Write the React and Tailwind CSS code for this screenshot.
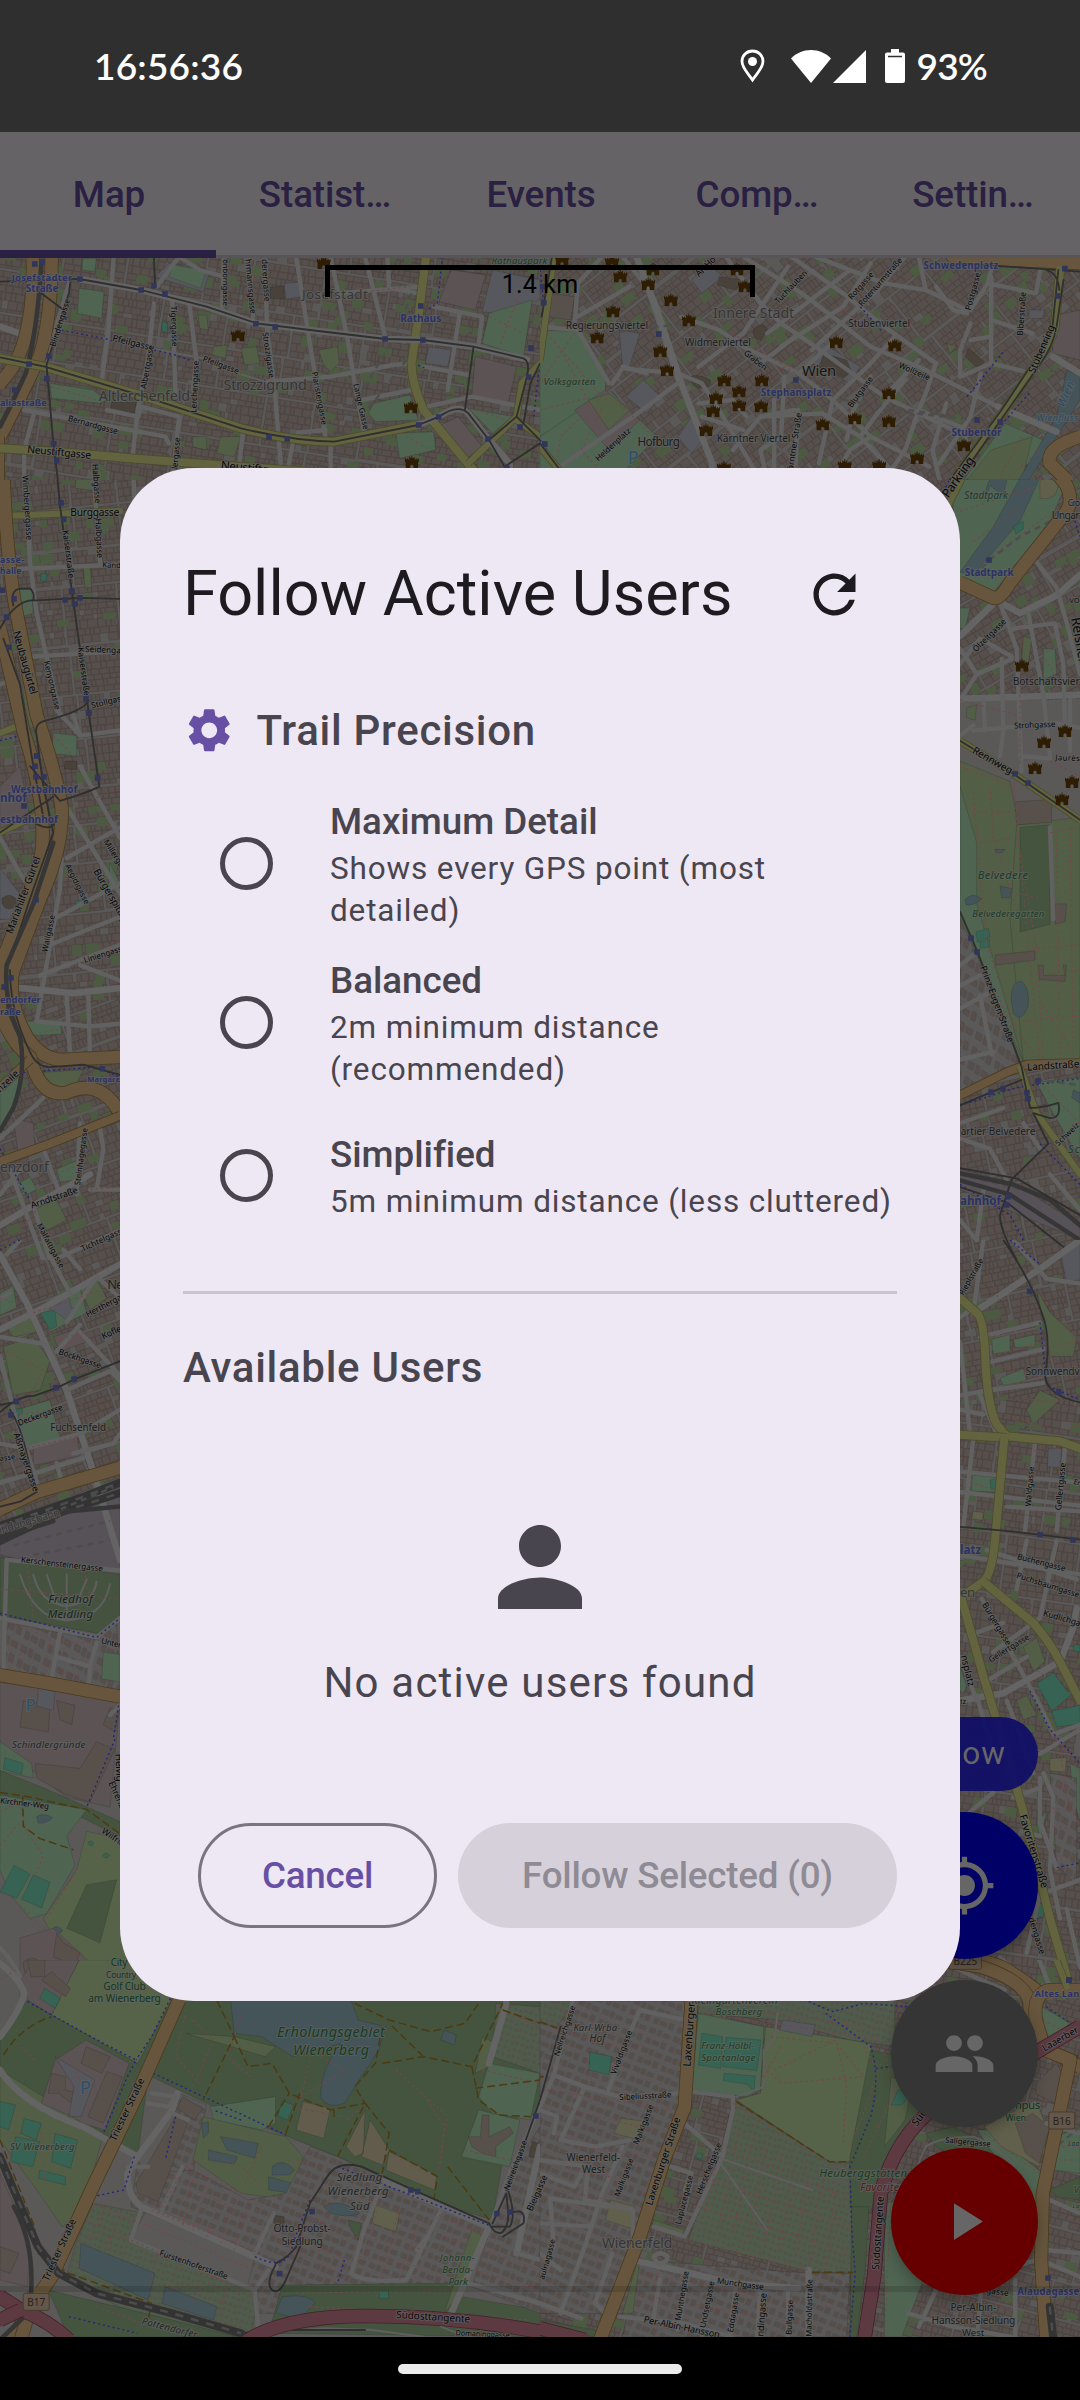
import React from "react";
import { MdRefresh, MdSettings, MdPerson, MdPeople, MdMyLocation, MdPlayArrow } from "react-icons/md";

/* ---------- Map styling ---------- */

const LINES = {
  w: ["#5f5f5f", 2],
  W: ["#616161", 4.4],
  V: ["#646464", 6.5],
  y: ["#62633f", 6, "#4c4d2a"],
  Y: ["#63643f", 8, "#4c4d2a"],
  o: ["#67563d", 8, "#4a3a1c"],
  O: ["#67563d", 12.5, "#4a3a1c"],
  M: ["#5d3a42", 13, "#43202a"],
  t: ["#2f2f2f", 1.8],
  r: ["#363636", 4.5],
  R: ["#333333", 8],
  d: ["#4d4d4d", 2.4, null, "6 5"],
  f: ["#74474a", 1.1, null, "2.5 3"],
  b: ["#25257a", 1.4, null, "2 3"],
  k: ["#4c3a10", 1.5, null, "8 4"],
};

const FILLS = {
  wood: "#45543f",
  grass: "#525e46",
  park: "#506452",
  golf: "#566349",
  water: "#445459",
  pitch: "#376354",
  bld: "#57504b",
  dark: "#48423b",
  retail: "#5c5355",
  rail: "#575257",
  plaza: "#57575e",
  cem: "#44523f",
  sand: "#615c4b",
  allot: "url(#plots)",
  res: "url(#homes)",
  hosp: "#61604c",
};

const TILES = [
  {
    x: 0, y: 250, w: 540, h: 230, vw: 1568, vh: 690,
    shapes: [
      ["plaza", "M490 40L610 60L590 125L450 80Z"],
      ["park", "M503 45L600 62L582 115L490 80Z"],
      ["park", "M240 25L280 25L275 65L238 60Z"],
      ["park", "M230 115L302 125L295 205L225 190Z"],
      ["dark", "M785 112L825 108L825 148L785 145Z"],
      ["plaza", "M825 100L870 96L875 140L830 148Z"],
      ["retail", "M1310 60L1410 75L1380 180L1275 155Z"],
      ["plaza", "M1430 60L1568 90L1568 150L1440 190L1400 185Z"],
      ["park", "M1420 190L1545 150L1520 320L1400 280Z"],
      ["grass", "M575 195L600 195L605 240L580 235Z"],
      ["pitch", "M470 215L487 220L485 248L470 244Z"],
      ["grass", "M620 290L660 285L655 325L615 315Z"],
      ["grass", "M700 295L745 290L755 340L710 345Z"],
      ["grass", "M925 300L980 290L985 340L960 365L940 345Z"],
      ["park", "M145 400L270 420L310 450L290 460L150 445Z"],
      ["dark", "M325 455L395 458L390 490L320 480Z"],
      ["park", "M1085 460L1190 435L1215 510L1090 515L1070 490Z"],
      ["park", "M1150 550L1260 545L1265 600L1160 625Z"],
      ["plaza", "M1245 290L1310 300L1300 350L1235 340Z"],
      ["retail", "M1380 320L1500 350L1475 460L1370 440Z"],
      ["park", "M1360 475L1490 500L1430 550Z"],
      ["retail", "M1250 540L1330 500L1400 590L1350 630Z"],
      ["grass", "M560 560L600 560L600 600L560 590Z"],
      ["grass", "M640 560L700 560L680 620L630 610Z"],
      ["V", "M0 230L90 262"],
      ["W", "M330 20L315 240L295 400"],
      ["W", "M447 160L430 330L400 480L385 620"],
      ["W", "M500 150L510 440M550 165L570 330L560 420"],
      ["W", "M520 20L455 110M520 20L580 60L650 80"],
      ["W", "M650 20L645 170M715 20L735 200M770 20L775 230L800 450L815 640"],
      ["w", "M300 265L510 310L590 325L690 370L770 395"],
      ["W", "M770 395L960 380L1140 345L1195 340"],
      ["W", "M860 20L895 250L945 560M960 20L1010 270L1030 400L1060 560"],
      ["W", "M1060 20L1120 267M1125 20L1130 115L1215 130M980 130L1220 110"],
      ["W", "M1260 170L1400 200L1390 280M1335 190L1300 420M1230 350L1360 375"],
      ["W", "M1050 450L1195 420M1240 470L1370 440L1568 480"],
      ["W", "M70 480L480 560L490 580M100 485L70 600L70 690"],
      ["W", "M310 480L400 500L410 470L520 500L500 690M705 550L690 690M850 580L830 690M960 590L960 690"],
      ["W", "M865 548L945 540M200 100L130 345"],
      ["f", "M1030 130L1190 110M730 20L740 100M690 270L700 380M1290 60L1270 160M1420 200L1520 250M1500 150L1450 290M1070 560L1065 680M1180 560L1250 600M150 410L280 450M1380 480L1470 510"],
      ["b", "M150 235L300 265L500 312L550 330M1285 20L1270 160L1240 180M1568 330L1550 500M1200 340L1235 355"],
      ["d", "M1195 130L1150 250L1010 500L980 650M1180 330L1060 490"],
      ["O", "M95 20Q100 180 65 290Q45 350 0 400"],
      ["O", "M150 20Q150 200 115 320Q60 440 0 560"],
      ["o", "M0 560L0 690"],
      ["r", "M120 40Q110 230 75 370L30 470L0 530"],
      ["Y", "M1237 20L1215 200L1195 340Q1195 400 1230 480L1350 630L1400 690"],
      ["Y", "M0 325L130 350L420 440L700 535Q850 575 970 575L1215 525"],
      ["Y", "M0 595L160 605L380 625L760 655L900 665"],
      ["y", "M1568 340L1515 400L1500 500L1400 600L1360 640M1500 510L1568 560"],
      ["V", "M230 87L410 120L600 170L745 220L900 240L1120 267L1228 270L1375 290L1530 328"],
      ["V", "M1215 525L1275 500Q1330 460 1360 490L1420 570L1480 640L1480 690"],
      ["t", "M0 95L230 87L410 120L600 170L745 220L900 240L1120 267L1228 270L1375 290L1520 325Q1540 335 1530 380L1500 500L1420 570"],
      ["t", "M447 20L450 105M205 90L200 130L135 345L155 580L168 690M120 130L185 180"],
      ["t", "M0 322L130 350L420 440L700 535Q850 572 970 575L1215 525L1275 500Q1330 460 1360 490L1420 570L1465 650M1375 290L1350 480M1500 500L1568 570M1568 340L1540 400L1520 520M1465 650L1568 580"],
    ],
    stops: [[101, 42], [122, 36], [232, 87], [447, 107], [410, 120], [479, 132], [743, 221], [799, 231], [1118, 267], [1228, 270], [1222, 168], [142, 318], [84, 342], [136, 386], [43, 420], [156, 581], [165, 632], [781, 561], [834, 567], [1216, 525], [1274, 501], [1417, 567], [1510, 531], [1535, 381], [1542, 294], [1472, 655]],
    castles: [[940, 38], [691, 255], [1193, 471], [1196, 636]],
    labels: [
      ["s", 34, 92, 210, 92, "Josefstädter"], ["s", 75, 126, 170, 126, "Straße"],
      ["s", 1162, 215, 1281, 215, "Rathaus"], ["s", 0, 469, 136, 469, "aliastraße"],
      ["q", 287, 452, 552, 452, "Altlerchenfeld"], ["q", 649, 420, 891, 420, "Strozzigrund"], ["q", 877, 147, 1068, 147, "Josefstadt"],
      ["n", 78, 608, 264, 626, "Neustiftgasse"], ["n", 640, 657, 780, 672, "Neustiftg"],
      ["n", 196, 512, 340, 553, "Bernardgasse"], ["n", 325, 272, 445, 303, "Pfeilgasse"], ["n", 587, 332, 690, 372, "Pfeilgasse"],
      ["n", 160, 292, 204, 150, "Blindengasse"], ["n", 424, 418, 447, 287, "Albertgasse"], ["n", 496, 168, 500, 290, "Tigergasse"],
      ["n", 570, 488, 577, 333, "Lerchengasse"], ["n", 762, 248, 782, 384, "Strozzigasse"], ["n", 905, 367, 934, 526, "Piaristengasse"],
      ["n", 1026, 403, 1056, 540, "Lange Gasse"], ["n", 648, 28, 648, 168, "önborngasse"], ["n", 712, 28, 727, 192, "hrmannsgasse"], ["n", 760, 28, 768, 155, "derergasse"],
      ["n", 515, 658, 523, 563, "lergasse"], ["n", 268, 640, 270, 690, "Halb"], ["g", 1427, 41, 1590, 41, "Rathauspark"],
    ],
  },
  {
    x: 540, y: 250, w: 540, h: 230, vw: 1568, vh: 690,
    shapes: [
      ["park", "M0 240L110 245L190 390L190 440L0 560Z"],
      ["park", "M0 560L200 420L340 560L220 690L0 690Z"],
      ["retail", "M100 480L190 420L290 510L200 600Z"],
      ["grass", "M140 450L200 430L260 480L200 540Z"],
      ["bld", "M30 130L100 140L90 210L25 200Z"],
      ["plaza", "M250 440L300 390L350 440L310 490Z"],
      ["plaza", "M230 240L290 250L260 350L240 350Z"],
      ["plaza", "M440 90L490 40L530 80L470 130Z"],
      ["plaza", "M815 275L930 350L900 400L790 340Z"],
      ["dark", "M825 310L890 330L905 365L880 385L810 350Z"],
      ["dark", "M520 80L590 90L570 120L515 105Z"],
      ["dark", "M435 380Q460 370 495 390Q500 410 470 415Q440 415 435 380Z"],
      ["dark", "M1245 295L1290 335L1270 355L1235 320Z"],
      ["dark", "M620 240Q650 210 660 240L640 270Q615 260 620 240Z"],
      ["plaza", "M400 560L440 500L480 560L440 610Z"],
      ["grass", "M1180 280L1210 290L1190 310Z"],
      ["park", "M1350 520L1460 570L1430 640L1230 690Z"],
      ["grass", "M1310 600L1430 560L1400 690L1240 690Z"],
      ["water", "M1530 360L1568 380L1568 450L1420 690L1390 690L1500 500Z"],
      ["retail", "M1480 200L1568 180L1568 330L1490 310Z"],
      ["plaza", "M1420 180L1465 180L1460 205L1420 205Z"],
      ["W", "M180 20L110 100L100 230M240 20L310 110L400 390M110 200L260 110M0 230L110 240L200 400"],
      ["W", "M210 400L240 355L400 370L470 400L520 480L640 690"],
      ["V", "M280 20L340 180L410 400L500 640L500 690"],
      ["W", "M410 200L520 240L590 290L750 370L850 450L960 560L1130 650"],
      ["W", "M460 350L590 250L700 80L720 50M540 20L640 160L700 220L800 290L1000 440L1200 540"],
      ["W", "M590 20L760 130L850 200L960 290L1100 350L1330 470"],
      ["W", "M730 20L880 130L1000 230L1150 340M800 20L1000 100L1120 120L1240 180"],
      ["W", "M660 250L900 60M700 290L880 170L960 40M790 300L980 120L1060 20"],
      ["W", "M850 450L960 340L1030 260M960 380L910 480L890 570M750 370L860 270M640 340L740 260"],
      ["W", "M680 450L680 690M710 380L700 560L640 600L660 690M850 450L810 640M750 480L740 690M640 500L820 490L930 560L1020 660"],
      ["W", "M460 460L560 450L600 500M560 600L640 500L740 480M590 540L470 500"],
      ["W", "M1120 120L1100 20M1150 110L1200 180L1240 190M1250 180L1300 100L1320 20M1310 80L1310 340M1250 270L1310 260"],
      ["W", "M1300 100L1440 130L1460 20M1310 210L1430 250M1220 380L1310 340L1430 370M1220 380L1220 300L1250 220"],
      ["W", "M1150 340L1120 430L1100 480L1060 600M1180 460L1140 600L1160 690M1060 390L980 490L930 560M1280 370L1250 500L1160 640"],
      ["W", "M1000 440L1100 330M1100 480L1220 530L1250 600M960 560L900 600L850 690M1060 600L1000 690"],
      ["V", "M1330 470L1500 545M1490 320L1568 370"],
      ["W", "M0 690L270 500L400 400M240 350L310 370"],
      ["f", "M20 250L180 440M100 250L0 400M60 300L150 470L60 560L40 690M200 430L120 600L200 690M220 450L330 560M0 480L150 440M560 250L640 300L740 370M660 380L730 340M940 440L990 470M1180 290L1240 280M1420 20L1430 100M1400 560L1330 690M1450 600L1350 690M600 560L620 640M860 170L960 230M1230 560L1300 500M700 600L780 690"],
      ["b", "M0 60L20 250M0 570L80 690M930 170L990 240M1240 440L1350 300M1420 430L1200 690"],
      ["d", "M200 250L420 220M880 450L1200 500M1000 480L1260 510"],
      ["O", "M1200 20L1340 28L1568 40"],
      ["t", "M1220 40L1568 65"],
      ["O", "M1568 560Q1470 590 1480 640L1530 690"],
      ["Y", "M1510 60L1495 230Q1480 290 1440 340L1350 480L1200 690"],
      ["t", "M1505 60L1488 230Q1470 290 1430 340L1340 480L1190 690M1520 90L1500 230Q1490 290 1450 345L1355 485L1215 690M1470 60Q1505 70 1508 120"],
      ["y", "M40 20L0 330M0 590L80 690"],
      ["t", "M35 20L5 200M0 580L80 690"],
    ],
    stops: [[8, 110], [11, 158], [345, 252], [743, 390], [1269, 510], [1336, 516], [1503, 138], [1524, 56], [14, 582]],
    castles: [[64, 28], [209, 35], [233, 78], [328, 57], [314, 101], [380, 149], [212, 183], [166, 261], [432, 210], [349, 302], [369, 359], [572, 57], [595, 107], [535, 390], [644, 390], [578, 423], [511, 443], [503, 482], [578, 465], [642, 468], [482, 539], [534, 652], [860, 275], [1030, 285], [914, 504], [1013, 429], [1013, 512], [821, 522], [885, 646], [985, 646], [1095, 623], [1231, 584]],
    labels: [
      ["s", 1114, 57, 1331, 57, "Schwedenplatz"], ["s", 641, 439, 846, 439, "Stephansplatz"], ["s", 1195, 558, 1340, 558, "Stubentor"],
      ["q", 502, 205, 738, 205, "Innere Stadt"], ["c", 761, 378, 860, 378, "Wien"],
      ["h", 75, 237, 314, 237, "Regierungsviertel"], ["h", 421, 289, 612, 289, "Widmerviertel"], ["h", 895, 230, 1075, 230, "Stubenviertel"],
      ["h", 513, 577, 727, 577, "Kärntner Viertel"], ["h", 283, 588, 406, 588, "Hofburg"],
      ["g", 10, 406, 161, 406, "Volksgarten"],
      ["n", 692, 162, 777, 70, "Tuchlauben"], ["n", 590, 312, 652, 362, "Graben"], ["n", 905, 150, 970, 75, "Rotgasse"], ["n", 935, 170, 1053, 32, "Rotenturmstraße"],
      ["n", 1250, 182, 1280, 70, "Postgasse"], ["n", 1402, 258, 1411, 127, "Biberstraße"], ["n", 1040, 352, 1128, 392, "Wollzeile"],
      ["n", 905, 475, 968, 387, "Blutgasse"], ["n", 735, 660, 760, 490, "ärntner Straße"], ["n", 170, 635, 265, 545, "Heldenplatz"],
      ["n", 1436, 372, 1496, 230, "Stubenring"], ["n", 1215, 700, 1263, 635, "kring"], ["n", 462, 82, 512, 30, "An Ho"],
      ["u", 1521, 474, 1553, 400, "Wien"], ["u", 1442, 512, 1562, 512, "Wienfluss"], ["p", 255, 642, 285, 642, "P"],
    ],
  },
  {
    x: 0, y: 480, w: 200, h: 780, vw: 600, vh: 1529, oy: 39,
    shapes: [
      ["grass", "M230 20L290 25L285 60L225 55Z"], ["pitch", "M122 223L140 223L140 237L122 237Z"],
      ["park", "M45 255L95 252L100 300L50 310Z"], ["grass", "M250 210L270 205L275 250L255 250Z"], ["grass", "M60 380L90 380L110 520L80 530Z"],
      ["park", "M160 535L230 540L230 580L155 575Z"], ["dark", "M195 590L230 590L230 607L192 605Z"], ["pitch", "M225 866L248 860L250 872L230 878Z"],
      ["retail", "M0 640L60 600L90 700L0 740Z"], ["park", "M50 1100L180 1100L185 1125L60 1130Z"], ["plaza", "M0 800L60 850L90 900L0 900Z"], ["dark", "M5 860Q30 845 50 862Q50 880 25 880Q5 878 5 860Z"],
      ["park", "M330 790L360 830L355 850L325 835Z"], ["grass", "M130 1200L250 1195L220 1235L140 1225Z"], ["park", "M0 1240L70 1180L60 1250L0 1310Z"],
      ["retail", "M40 1290L100 1300L105 1350L55 1360Z"], ["park", "M170 1390L240 1370L240 1410L180 1415Z"], ["grass", "M100 1470L170 1450L200 1490L140 1510Z"], ["park", "M50 1420L90 1405L110 1430L80 1440Z"],
      ["W", "M75 20L90 200L110 300L180 500M280 20L300 200M400 20L410 200"],
      ["W", "M0 215L240 208L360 205M100 385L360 375M240 540L360 530M170 490L240 540L220 500"],
      ["W", "M0 440L20 435M200 680L360 850M240 600L360 740M200 780L360 720M180 840L110 1100M185 780L180 840"],
      ["W", "M160 900L360 830M150 950L360 895M120 1010L360 950M240 990L360 1020"],
      ["V", "M60 1035L220 1045L360 1035"], ["W", "M200 1050L210 1160M265 1050L270 1170M110 1100L270 1110L360 1105M0 1070L30 1060"],
      ["W", "M0 740L60 810L80 830M20 730L80 700M130 1350L180 1440M0 1330L130 1250M300 1310L310 1350L290 1430M240 1300L230 1440M270 1430L360 1430"],
      ["V", "M0 1500L130 1450L270 1400"], ["W", "M100 1460L150 1568M30 1390L130 1568M160 1568L360 1510M0 1440L60 1390"],
      ["f", "M45 260L95 300M60 380L90 520M160 540L220 580M0 620L60 660L80 740M200 690L360 640M0 580L50 610M70 1130L180 1115M120 1140L200 1160M0 1380L40 1350M170 1400L240 1380M290 960L360 940M40 1180L130 1240M270 1430L360 1425M0 1560L110 1470M320 20L330 120"],
      ["b", "M0 550L60 540M70 1200L290 1190L360 1210M100 1200L140 1250M0 1350L90 1450"],
      ["y", "M0 110L360 100"], ["y", "M0 535L60 520L90 560M0 730L130 690"],
      ["O", "M10 20Q20 200 50 300L110 500Q170 620 185 680Q190 760 120 860L40 1000Q20 1060 80 1130Q130 1180 200 1175L360 1170"],
      ["O", "M0 330L70 530Q150 690 120 790L20 960Q-10 1000 0 1080Q30 1140 90 1170Q120 1250 200 1240Q300 1210 360 1280"],
      ["o", "M0 1230L90 1175M0 1375L150 1340L360 1285"],
      ["t", "M170 20L180 90L240 370L265 490L298 640Q270 650 180 668L90 600M0 330Q50 270 110 275L240 270L360 272M40 285Q30 255 60 252L90 252Q105 260 100 275"],
      ["t", "M265 470Q260 490 140 510Q100 515 110 540L130 640L160 730L90 860L30 980M10 350L60 440L100 600L130 700M0 730L160 660M80 700Q160 740 170 700"],
      ["r", "M160 750L100 870L20 990Q10 1060 60 1130Q80 1200 40 1270L0 1315"],
      ["t", "M30 1000Q30 1080 90 1160Q110 1190 150 1190L250 1185L360 1205"],
    ],
    stops: [[183, 84], [191, 116], [216, 257], [42, 272], [195, 274], [240, 270], [225, 282], [27, 367], [20, 308], [8, 255], [258, 468], [267, 496], [293, 623], [105, 600], [110, 580], [108, 621], [131, 621], [72, 678], [108, 862], [33, 1015], [12, 1033], [307, 1193]],
    castles: [],
    labels: [
      ["s", 0, 202, 72, 202, "asse-"], ["s", 0, 224, 64, 224, "halle"], ["s", 33, 653, 232, 653, "Westbahnhof"], ["s", 0, 670, 80, 670, "nhof"], ["s", 0, 711, 174, 711, "estbahnhof"],
      ["s", 0, 1064, 122, 1064, "endorfer"], ["s", 0, 1088, 62, 1088, "raße"], ["s", 262, 1219, 470, 1219, "Margaretengürtel"],
      ["q", 0, 1396, 146, 1396, "enzdorf"], ["n", 211, 109, 358, 109, "Burggasse"],
      ["n", 67, 30, 80, 157, "Wimbergergasse"], ["n", 188, 138, 206, 232, "Kaiserstraße"], ["n", 233, 368, 252, 462, "Kaiserstraße"], ["n", 277, 8, 285, 85, "Halbgasse"], ["n", 286, 115, 292, 192, "Halbgasse"],
      ["n", 307, 210, 430, 214, "Kandlgasse"], ["n", 255, 376, 400, 380, "Seidengasse"], ["n", 276, 487, 390, 468, "Stollgasse"],
      ["n", 38, 337, 92, 460, "Neubaugürtel"], ["n", 132, 395, 165, 490, "Kenyongasse"], ["n", 37, 930, 122, 780, "Mariahilfer Gürtel"],
      ["n", 195, 795, 255, 872, "Aegidigasse"], ["n", 280, 806, 385, 925, "Bürgerspitalgas"], ["n", 310, 748, 380, 820, "Millergasse"], ["n", 142, 965, 165, 893, "Wallgasse"],
      ["n", 254, 986, 380, 960, "Liniengasse"], ["n", 0, 1240, 58, 1204, "nzeile"], ["n", 240, 1422, 263, 1310, "Steinhagegasse"],
      ["n", 96, 1467, 235, 1436, "Arndtstraße"], ["n", 110, 1500, 180, 1585, "Malfattigasse"], ["n", 248, 1552, 380, 1512, "Tichtelgasse"],
    ],
  },
  {
    x: 0, y: 1240, w: 200, h: 760, vw: 600, vh: 1568,
    shapes: [
      ["grass", "M20 180L90 160L110 190L40 200Z"], ["park", "M115 140L240 100L260 150L150 190Z"], ["pitch", "M120 150L165 145L170 178L150 185Z"], ["plaza", "M140 140L180 130L200 105L215 140L230 140L200 165L170 150Z"], ["grass", "M240 100L290 80L320 120L270 145Z"],
      ["park", "M0 110L40 95L50 140L0 155Z"], ["grass", "M10 220L100 200L150 250L120 310L40 320Z"], ["park", "M50 350L150 330L180 410L80 430Z"], ["pitch", "M42 350L68 347L66 360L45 363Z"],
      ["retail", "M100 430L230 400L240 445L100 465Z"], ["retail", "M160 200L240 180L260 210L180 230Z"],
      ["rail", "M0 600L360 510L360 700L0 650Z"],
      ["cem", "M0 655L360 690L360 780L320 815L0 775Z"], ["retail", "M0 910L360 950L330 1170L200 1150L90 1090L0 1060Z"],
      ["res", "M25 790L290 825L350 790L360 930L0 890Z"],
      ["bld", "M70 950L150 960L145 1015L60 1005Z"], ["bld", "M105 1080L240 1090L290 1035L345 1050L270 1160L200 1145L110 1110Z"], ["bld", "M170 950L225 960L215 1000L180 990Z"], ["bld", "M330 965L358 970L345 1015L310 1000Z"],
      ["park", "M310 850L360 855L360 912L305 905Z"], ["plaza", "M115 925L165 932L160 970L110 962Z"],
      ["park", "M0 1035L95 1080L100 1110L0 1095Z"], ["wood", "M0 1095L130 1130L360 1200L360 1230L240 1190L0 1150Z"],
      ["park", "M0 1145L260 1175L200 1230L225 1290L140 1390L90 1400L30 1350L0 1300Z"],
      ["golf", "M260 1220L360 1235L600 1400L600 1568L270 1568L130 1400L230 1300Z"], ["wood", "M260 1330L350 1320L300 1450L200 1420Z"], ["water", "M110 1190Q130 1180 158 1192Q140 1205 115 1203Z"],
      ["pitch", "M42 1290L90 1308L50 1358L0 1345Z"], ["pitch", "M100 1310L150 1325L125 1378L65 1360Z"], ["pitch", "M15 1068L70 1080L65 1102L10 1092Z"],
      ["water", "M155 1422Q170 1410 188 1424Q180 1434 160 1432Z"], ["pitch", "M263 1245Q270 1235 282 1245Q275 1255 263 1245ZM308 1270Q318 1260 328 1270Q320 1280 308 1270ZM275 1495Q285 1490 292 1505Q280 1515 275 1495Z"],
      ["retail", "M60 1440L160 1420L270 1490L220 1568L60 1568Z"], ["bld", "M70 1490Q100 1470 140 1500Q130 1530 90 1525Q70 1515 70 1490ZM170 1430L190 1450L240 1470L225 1495L160 1480Z"], ["pitch", "M130 1545L190 1568L120 1568Z"],
      ["V", "M0 185L130 140L360 50"], ["V", "M0 30L80 130L200 310L290 500L320 570L360 660"], ["W", "M140 20L210 110M190 20L240 60M60 0L20 30M0 120L30 110M0 200L140 215"],
      ["W", "M200 170L290 75L360 120M240 190L360 280M170 230L240 175M0 240L40 350L120 520M0 420L80 430L240 400L360 350"],
      ["W", "M200 310L330 270L360 290M220 440L340 420L360 400M110 480L250 450M170 460L190 510M0 500L110 480"],
      ["W", "M20 660L360 682M20 660L10 890M0 780L290 820L360 780M180 810L150 920M170 860L270 880L290 830M270 880L265 930"],
      ["W", "M330 980L360 960M0 1460Q70 1510 80 1568"], ["w", "M60 690Q100 780 200 785Q310 780 330 710M100 690Q120 750 200 755Q280 750 290 705M200 690L200 785M140 690L170 750M260 700L230 750"],
      ["f", "M0 120L50 130M20 230L130 270L90 320M60 360L170 350M80 430L230 405L200 450M150 210L260 190L180 230M30 790L150 820L130 900M40 800L30 890L100 900M60 830L60 890M180 830L270 830M170 890L260 900M0 720L360 740M80 660L100 780M250 670L280 780M100 150L360 90M240 340L330 340M260 370L340 350M0 1180L60 1160L80 1220L130 1270L100 1320M0 1250L60 1200M90 1400L260 1490L200 1568M100 1440L230 1500M140 1400L230 1300M20 1350L90 1390"],
      ["b", "M0 770L290 820L360 780M345 1030L260 1170M0 20L60 0M360 940L340 1030"],
      ["k", "M0 1140L80 1148L260 1175L360 1225M68 1148L70 1210L120 1235L220 1258"],
      ["O", "M0 555L110 520L360 470"], ["O", "M0 898L150 915L360 942"],
      ["t", "M0 355Q60 320 100 322L170 305L225 287L360 250M30 350Q60 380 80 440L110 520L60 540L0 550M0 340L40 335"],
      ["R", "M0 590L250 530L360 500"], ["R", "M0 602L280 540L360 522"], ["r", "M0 625L200 560L360 550"], ["r", "M0 615L160 580"], ["d", "M60 590L340 510M40 630L330 580M100 650L330 620"],
    ],
    stops: [[48, 333], [33, 361], [168, 305], [222, 287]],
    castles: [],
    labels: [
      ["n", 263, 160, 400, 110, "Herthergasse"], ["n", 310, 205, 390, 180, "Koflerg"], ["n", 174, 235, 300, 265, "Böckhgasse"],
      ["n", 57, 384, 190, 350, "Deckergasse"], ["n", 0, 456, 46, 452, "asse"], ["n", 40, 400, 100, 520, "Aßmayergasse"], ["h", 151, 393, 318, 393, "Fuchsenfeld"], ["h", 322, 100, 390, 100, "Neu"],
      ["q", 0, 606, 182, 568, "indungsbahn"], ["n", 62, 665, 308, 684, "Kerschensteinergasse"],
      ["i", 145, 749, 278, 749, "Friedhof"], ["i", 143, 779, 279, 779, "Meidling"], ["j", 36, 1047, 256, 1047, "Schindlergründe"], ["n", 302, 832, 390, 846, "Unter-M"],
      ["n", 0, 1162, 146, 1174, "Kirchner-Weg"], ["n", 303, 1222, 400, 1268, "Wilfried-K"], ["n", 346, 1060, 350, 1118, "Helvig"], ["n", 325, 1120, 362, 1175, "Ehrenb"],
      ["g2", 332, 1497, 382, 1497, "City"], ["p", 77, 971, 105, 971, "P"],
    ],
  },
  {
    x: 940, y: 480, w: 140, h: 780, vw: 420, vh: 1529, oy: 39,
    shapes: [
      ["park", "M30 20L320 0L370 60L330 120L160 260L60 240Z"], ["water", "M270 0L310 20L240 120L100 225L60 220L160 130Z"], ["water", "M170 20L200 40L190 70L150 50L140 70Q130 50 170 20Z"], ["pitch", "M220 130L250 120L250 135L228 145Z"],
      ["hosp", "M300 40Q330 25 355 50Q350 80 300 75Z"], ["park", "M60 290L90 290L75 330L60 330Z"], ["grass", "M250 345L275 350L265 400L245 390Z"], ["park", "M310 370L345 370L350 420L310 430Z"], ["grass", "M80 485L110 480L105 510L80 505Z"],
      ["grass", "M60 590L210 630L240 730L300 1190L240 1185L60 900Z"], ["park", "M60 640L110 750L110 870L170 1000L250 1180L60 890Z"], ["grass", "M230 715L420 700L420 1180L250 1180L210 900Z"], ["wood", "M240 720L330 715L330 910L240 925Z"],
      ["water", "M213 1055Q215 1020 245 1022Q270 1035 265 1070Q245 1105 220 1085Z"], ["water", "M75 862Q95 845 125 860Q100 875 78 872ZM165 763L195 763L185 770L168 770ZM180 835L215 840L210 858L185 858Z"],
      ["pitch", "M108 925L145 918L150 935L112 945ZM120 945L150 940L145 955L122 957Z"], ["bld", "M165 970L285 962L285 980L168 990ZM295 990L310 990L310 1010L375 1010L370 990L380 990L375 1022L298 1018Z"], ["bld", "M345 870L380 870L375 905L345 910Z"],
      ["bld", "M225 670L335 665L335 710L230 715Z"],
      ["res", "M60 900L110 970L200 1110L240 1190L60 1240Z"],
      ["park", "M290 1220L420 1210L420 1370L330 1270Z"], ["water", "M400 1235L420 1240L420 1260L395 1250Z"],
      ["rail", "M60 1390L230 1420L420 1500L420 1529L60 1430Z"],
      ["V", "M60 345L170 275L240 300L350 265L420 225"], ["W", "M180 280L230 370L245 610M290 200L350 250L385 330L420 420M60 370L110 420L215 390M110 420L60 470M60 400L120 350L215 385"],
      ["V", "M60 468L200 465L420 460"], ["W", "M130 470L135 530M185 390L190 530L180 580M100 530L350 515L420 525M240 580L330 585M265 300L310 460L330 580M220 330L345 320L370 400L375 520M60 540L100 520M390 470L390 570"],
      ["W", "M100 970L60 990M120 1010L60 1030M145 1045L60 1075M160 1160L60 1175M120 1050L155 1165M330 720L340 900"], ["W", "M60 1300L190 1270M60 1330L150 1350L200 1410M130 1430L110 1529M250 1300L300 1350M330 1400L420 1470M60 1490L110 1529"],
      ["f", "M60 100L300 50M100 160L240 90M130 200L320 110M60 600L220 640L300 1180M100 650L110 740L140 950L230 1120L300 1180M150 640L160 740L240 900M230 730L290 960L310 1180M120 690L210 690M120 750L220 740M250 1100L420 1090M260 960L420 950M270 1010L420 1000M300 1060L400 1160M330 730L420 720M350 740L360 1170M390 720L400 1170M310 380L350 430M240 320L240 600M60 470L230 500M330 590L420 620M220 620L230 690M140 1000L180 1060L250 1170M300 1220L420 1300M60 1280L80 1400M190 1380L200 1500M240 850L300 860"],
      ["b", "M60 1265L230 1230L420 1212M0 80L40 20M300 1340L420 1420M60 1420L210 1480L250 1529M400 110L420 150"],
      ["d", "M60 260L150 195L240 150L330 120M290 1215L420 1225M60 1400L300 1440L420 1500"],
      ["O", "M60 240L160 270Q180 275 210 240L380 100Q400 80 380 50L320 0"], ["o", "M60 1245L200 1200L260 1185L420 1182"],
      ["y", "M60 550L220 615L420 705M0 120L70 30"], ["t", "M60 550L220 615L420 705"],
      ["y", "M240 1190L290 1280L420 1400"],
      ["t", "M60 885L110 960L200 1110L245 1190L270 1270Q310 1270 355 1260Q365 1290 330 1290L280 1280L325 1340L215 1410L180 1480Q180 1510 230 1568M60 1265L150 1240L245 1215"],
      ["r", "M60 1398L220 1420L330 1450L420 1500"], ["r", "M60 1412L210 1440L420 1529"], ["t", "M60 1388L230 1408L420 1480M60 1425L200 1455L420 1568"],
    ],
    stops: [[147, 196], [225, 615], [264, 633], [93, 937], [111, 964], [153, 1239], [189, 1232], [261, 1240], [264, 1252], [294, 1217], [204, 1444], [200, 1460]],
    castles: [[246, 402], [312, 552], [375, 530], [285, 603], [396, 630], [366, 664]],
    labels: [
      ["g", 73, 77, 204, 77, "Stadtpark"], ["s", 74, 228, 221, 228, "Stadtpark"], ["n", 25, 75, 105, 0, "Parkring"], ["h", 383, 90, 420, 90, "Gro"], ["h", 335, 115, 419, 115, "Ungar"], ["h", 388, 280, 419, 280, "vo"],
      ["n", 108, 377, 200, 318, "Ölzeltgasse"], ["h", 218, 441, 419, 441, "Botschaftsvier"], ["n", 223, 526, 347, 523, "Strohgasse"], ["n", 346, 588, 419, 590, "Jaurès"], ["n", 95, 573, 210, 616, "Rennweg"], ["n", 393, 310, 418, 400, "Reisner"],
      ["g", 113, 822, 264, 822, "Belvedere"], ["g", 97, 895, 313, 895, "Belvederegarten"], ["n", 120, 994, 205, 1143, "Prinz-Eugen-Straße"], ["n", 262, 1197, 419, 1190, "Landstraße"],
      ["h", 62, 1323, 286, 1323, "artier Belvedere"], ["s", 60, 1460, 183, 1460, "ahnhof"], ["n", 355, 1345, 419, 1305, "Schweiz"], ["g", 384, 1359, 419, 1359, "Sc"],
    ],
  },
  {
    x: 860, y: 1240, w: 220, h: 760, vw: 660, vh: 1568,
    shapes: [
      ["plaza", "M600 20L660 0L660 80L620 90Z"], ["grass", "M530 100L570 150L650 200L640 240L570 240Z"], ["park", "M395 205L450 195L450 230L400 235Z"], ["park", "M460 205L525 195L525 220L465 222Z"], ["park", "M420 285L490 265L500 290L430 300Z"], ["grass", "M540 310L600 330L520 380L500 350Z"],
      ["park", "M337 485L410 490L405 520L335 518Z"], ["pitch", "M390 495L410 492L408 515L392 512Z"], ["hosp", "M338 560L370 562L368 578L336 576Z"], ["plaza", "M565 430L605 430L600 470L562 468Z"],
      ["grass", "M490 840L530 820L555 870L520 890Z"], ["grass", "M470 950L500 940L530 980L490 990Z"], ["pitch", "M580 893L632 940L575 972L530 915Z"], ["pitch", "M575 972L660 960L660 998L590 1005Z"], ["pitch", "M640 835L660 835L660 850L640 848Z"], ["park", "M300 880L320 920L310 935L300 930Z"],
      ["hosp", "M570 1070L620 1068L615 1098L570 1095Z"], ["park", "M630 1080L660 1090L660 1200L640 1150Z"], ["res", "M570 1100L650 1110L650 1330L590 1290Z"], ["pitch", "M525 1370L550 1368L552 1395L528 1400Z"], ["park", "M530 1200L560 1180L540 1240Z"],
      ["V", "M340 150L430 110L560 50L660 0"], ["W", "M370 0L340 150M300 160L340 140M360 200L540 170M370 255L550 225M390 310L550 295M300 320L390 310M300 210L330 400M360 320L410 400"],
      ["W", "M300 350L370 360M340 410L310 590M300 478L410 485L660 500M300 520L660 548M525 420L495 600M615 430L590 600M440 550L660 560M300 650L660 690"],
      ["W", "M500 620L470 720M590 620L540 780M380 640L650 700M365 740L540 960M540 960L580 1020L660 1000M430 790L350 810M540 780L400 850M500 860L380 910"],
      ["V", "M300 950L430 935L600 870L640 800L650 760"], ["W", "M440 950L480 1020L520 1100M540 1060L660 1010M350 940L400 1060M400 1140L330 1180M460 1150L540 1130M550 1100L580 1150L570 1300L600 1400M540 1110L540 1200L590 1295M490 1220L540 1230M300 860L350 950"],
      ["W", "M470 1370L540 1350L660 1320M540 1350L500 1470M620 1380L660 1500M420 1480L500 1530M460 0L560 80L660 90"],
      ["f", "M380 60L420 130M385 200L520 190M400 240L540 210M410 260L540 280L450 300M420 320L640 340M440 360L600 400L660 380M540 110L650 200M560 220L660 210M570 240L650 300M330 500L400 515M440 440L600 430M480 570L560 560M460 860L560 900M480 950L520 980M560 1000L660 1100M480 720L560 840M580 1060L640 1050M600 1110L650 1200M560 1170L650 1180M580 1210L650 1215M580 1245L650 1245M590 1270L650 1275M480 1430L560 1450M440 1440L520 1500M320 860L390 880M600 1060L620 1130"],
      ["b", "M540 170L560 300L660 330M440 400L560 410M510 930L570 1010L660 1080M590 1295L660 1285M450 0L540 50M395 940L420 990"],
      ["Y", "M300 120L350 150Q370 160 375 230Q380 340 410 380L440 405L600 415L660 430"], ["Y", "M300 402L440 408"], ["Y", "M433 410L405 620Q395 690 370 705L305 735"],
      ["Y", "M370 705L520 790Q570 830 600 870L660 950"], ["Y", "M305 740L370 900L440 1060L490 1180L570 1400L625 1530"],
      ["t", "M430 0Q510 80 545 150Q575 200 555 280Q560 320 660 335M300 592L440 600L660 618"],
      ["O", "M270 1480Q400 1485 450 1510Q520 1540 560 1568"],
    ],
    stops: [[509, 106], [596, 313], [540, 608], [639, 619], [627, 1527]],
    castles: [],
    labels: [
      ["n", 310, 115, 371, 42, "Rieplstraße"], ["h", 497, 278, 659, 278, "Sonnwendv"], ["n", 512, 550, 522, 468, "Waldgasse"], ["n", 603, 558, 617, 460, "Gellertgasse"], ["n", 470, 658, 614, 684, "Buchengasse"], ["n", 468, 697, 655, 738, "Puchsbaumgasse"], ["n", 548, 775, 659, 797, "Kudlichga"],
      ["s", 300, 648, 364, 648, "latz"], ["q", 300, 736, 346, 736, "en"], ["n", 365, 752, 440, 838, "Bürgergasse"], ["n", 392, 872, 510, 822, "Gellertgasse"], ["n", 302, 858, 325, 922, "nsplatz"], ["n", 301, 958, 318, 958, "tz"],
      ["n", 478, 1188, 545, 1338, "Favoritenstraße"], ["n", 505, 1400, 540, 1475, "dengasse"], ["n", 640, 503, 659, 507, "Er"],
    ],
  },
  {
    x: 0, y: 1960, w: 540, h: 380, vw: 1568, vh: 1140,
    shapes: [
      ["wood", "M80 120L300 250L400 310L440 130L540 120L1568 120L1568 460L1480 480L1430 780L1250 720L980 590L600 430L430 345L400 590L340 540L240 500L60 430L0 330L0 230Z"],
      ["golf", "M230 0L490 0L500 115L400 310L150 165L180 100Z"], ["grass", "M0 330L300 520L240 760L180 800L100 680L0 540Z"],
      ["retail", "M100 0L230 0L150 165L80 120L60 60Z"], ["bld", "M80 0L130 0L130 50L90 50ZM120 60L150 35L205 85L190 110Z"], ["pitch", "M130 85L175 115L160 145L115 115Z"],
      ["retail", "M250 240L375 310L305 510L240 490L210 470L120 430L160 300Z"], ["bld", "M250 260L320 290L295 340L235 310ZM310 335L355 350L300 490L255 470ZM150 340L190 350L190 390L230 400L220 440L170 400L140 400Z"], ["plaza", "M160 290L275 360L235 470L200 470L215 380Z"],
      ["pitch", "M0 425L45 435L25 510L0 500ZM70 475L120 490L105 540L60 520ZM45 530L115 545L95 620L30 605ZM160 520L225 540L205 625L150 605ZM115 630L190 650L190 675L112 655Z"],
      ["water", "M670 122L1020 122L1040 180L1120 200L1100 270L1000 430Q950 450 930 410Q930 330 990 250L850 290L760 230L680 220Z"], ["grass", "M540 220L680 230L800 260L770 290L640 250Z"],
      ["sand", "M1060 450L1005 560L1030 590L1055 580ZM880 425L960 445L940 535L860 510ZM1075 480L1130 570L1110 615L1050 590ZM1130 575L1268 645L1262 690L1120 630Z"], ["pitch", "M820 423L853 435L835 480L806 468ZM650 465L685 480L680 497L642 485ZM1500 375L1545 360L1530 430L1490 440Z"], ["park", "M610 440L800 410L800 490L760 510L620 480Z"],
      ["park", "M1420 310L1568 340L1540 480L1430 460L1390 410Z"], ["grass", "M1400 230L1440 250L1420 320L1380 340Z"], ["park", "M1390 450L1510 480L1480 620L1340 590Z"], ["bld", "M1400 465L1420 465L1420 530L1480 500L1490 520L1440 560L1440 590L1400 580L1370 560L1360 530L1395 530Z"],
      ["allot", "M1440 130L1568 140L1568 340L1430 290Z"], ["res", "M520 400L600 435L560 640L480 610Z"],
      ["grass", "M560 600L590 470L830 530L880 590L840 720L700 700Z"], ["water", "M585 490L605 485L605 520L590 535ZM640 530L750 550L740 595L660 570ZM605 570L690 590L680 612L605 600ZM790 620Q820 590 855 630L840 645L790 645ZM780 650L850 670L850 700L780 690Z"],
      ["res", "M430 640L560 630L720 720L830 700L900 560L980 590L1250 720L1420 790L1320 1060L700 1060L740 890L380 740L400 600Z"],
      ["bld", "M530 410L590 445L565 480L515 445ZM510 470L545 490L460 725L400 700L395 670Z"],
      ["water", "M940 740Q990 710 1045 760Q1010 775 960 760ZM1290 210L1325 225L1320 255L1280 240Z"], ["hosp", "M1090 735L1160 760L1150 815L1080 790Z"], ["wood", "M1010 780L1050 790L1040 840L1020 810Z"],
      ["allot", "M270 730L420 760L380 840L750 990L730 1131L480 1110L190 960L220 850Z"], ["water", "M235 850L450 940L430 1020L230 925ZM480 980L630 1040L620 1080L470 1030Z"],
      ["wood", "M820 975L1320 970L1340 1010L1568 1050L1568 1131L780 1120Z"], ["water", "M820 1010Q900 1000 915 1030L870 1075L800 1060Z"], ["pitch", "M1102 993L1128 993L1128 1015L1102 1015Z"], ["retail", "M0 640L60 780L85 880L80 980L0 960Z"], ["bld", "M0 860L55 880L30 940L0 930Z"],
      ["wood", "M140 990L500 1080L690 1131L200 1131Z"],
      ["res", "M1430 790L1480 640L1568 500L1568 1060L1370 980Z"], ["grass", "M1370 810L1410 830L1350 980L1290 1060L1340 900Z"], ["dark", "M1545 545L1568 550L1568 600L1535 590Z"], ["dark", "M795 765L825 770L825 795L795 790Z"],
      ["V", "M0 10Q60 60 70 100Q60 150 0 230"], ["V", "M0 330Q60 430 240 500L400 590M515 400L500 450L400 590L370 640Q370 710 410 740L740 890L800 920"],
      ["W", "M500 460L545 480M530 620L470 750M410 750L380 840L740 990M795 760L740 880M440 400L510 410L490 440L430 430M430 620L370 620"],
      ["V", "M1110 660L1420 800M1420 800L1310 1060M1470 130L1420 310M1568 560L1500 880"], ["W", "M1110 670L1060 800L1020 940Q1060 970 1180 960L1280 750M1240 830L1210 870M1430 780L1480 640L1568 440M1360 970L1568 1030M1500 880L1568 900M740 990L750 1110M780 930L740 990"],
      ["w", "M0 1090L40 1090M880 1110L940 1105L1080 1110L1230 1130M1280 1100L1330 1120"],
      ["f", "M540 150L510 290L580 370M560 180L620 240L560 380M700 170L660 290L740 360M900 300L870 430M930 290L1000 330L860 420M1150 330L1300 470L1270 640M1240 420L1290 500L1280 620M1010 480L1060 430M600 580L700 620L760 680M570 600L540 620L700 700M760 560L700 700M860 600L950 640M100 300L40 240M20 520L200 520M120 500L130 660M520 650L460 760M560 660L530 800M600 680L560 810M640 700L600 830M680 720L640 850M720 740L680 870M440 750L780 890M480 640L740 780M870 760L1050 840M860 830L1010 900M840 870L1010 950M900 700L870 880M960 700L920 900M1100 720L1060 900M1160 740L1110 950M1220 770L1160 960M1040 830L1240 870M1040 890L1220 920M1260 760L1400 820M1280 830L1370 860M270 730L740 930M250 780L750 1010M300 760L250 860M350 770L300 880M460 880L430 990M520 900L490 1000M590 930L560 1030M660 960L640 1060M900 1040L1540 1080M860 1000L1340 990M1350 570L1480 600M1400 330L1568 370M1440 140L1568 200M1400 870L1568 930M1380 930L1568 990M200 290L240 380M0 60L60 20M280 1040L440 1100M840 440L1000 470"],
      ["b", "M80 125L300 250L395 300L370 350L300 520M495 115L440 230L395 300M445 340L830 525M390 590L360 690L270 710M510 470L480 600M700 480L620 450M740 890Q840 940 850 850L900 720M980 620L1430 800M1000 900L980 970M200 1070L400 1120"],
      ["k", "M10 285Q60 200 150 170M630 122L680 230L590 420M680 230L720 320L790 310L840 400L960 450L1060 430L1030 380L1090 310L1110 200M1030 130L1130 180L1250 215L1350 190L1390 130M1110 310L1230 290L1370 320L1460 130M1370 320L1390 420L1450 465L1540 470M1060 430L1130 520L1110 640M1130 570L1270 650L1260 720M1300 620L1420 780M1230 290L1130 190M830 520L870 400M780 500L840 400M970 450L970 470M980 590L1060 430M1380 385L1568 360M0 540L100 800L110 880L200 940L440 1030L430 1080M1460 150L1568 190"],
      ["t", "M1060 1110L780 1110L700 1120"],
      ["O", "M520 120L400 400L270 680L150 950L110 1010L40 1130"], ["O", "M100 1000L60 1140"],
      ["R", "M0 590L40 690L110 860L170 940L280 1000L500 1060L700 1120"], ["r", "M40 740Q100 850 90 1000L80 1060L0 1140"],
      ["M", "M0 1010L60 1050Q140 1080 200 1140"], ["M", "M720 1140Q830 1070 1050 1068Q1300 1065 1568 1115"], ["M", "M0 1080L60 1050"],
      ["t", "M800 910Q840 890 860 860L900 730L950 650Q980 600 1050 620L1190 685L1420 790Q1440 830 1460 815Q1480 790 1475 750L1470 700L1430 790M1568 420L1520 560L1470 690M800 915Q770 970 790 990Q810 1005 830 960L880 840M1475 690Q1500 770 1480 800L1430 800M1480 760Q1530 740 1520 790L1460 830"],
    ],
    stops: [[1193, 690], [1213, 695], [906, 755], [812, 941], [1443, 761], [1481, 756], [1556, 468]],
    castles: [],
    labels: [
      ["g2", 308, 55, 395, 55, "Country"], ["g2", 300, 90, 424, 90, "Golf Club"], ["g2", 256, 127, 467, 127, "am Wienerberg"],
      ["g", 804, 230, 1117, 230, "Erholungsgebiet"], ["g", 851, 284, 1071, 284, "Wienerberg"], ["g", 29, 571, 216, 571, "SV Wienerberg"], ["p", 232, 402, 262, 402, "P"],
      ["j", 978, 664, 1110, 664, "Siedlung"], ["j", 951, 706, 1128, 706, "Wienerberg"], ["j", 1016, 749, 1073, 749, "Süd"], ["h", 794, 816, 960, 816, "Otto-Probst-"], ["h", 818, 854, 937, 854, "Siedlung"],
      ["g", 1278, 902, 1378, 902, "Johann-"], ["g", 1284, 938, 1374, 938, "Benda-"], ["g", 1302, 974, 1358, 974, "Park"],
      ["n", 335, 545, 420, 360, "Triester Straße"], ["n", 140, 965, 222, 782, "Triester Straße"], ["n", 462, 885, 658, 958, "Fürstenhoferstraße"], ["n", 1150, 1074, 1365, 1088, "Südosttangente"],
      ["n", 1478, 692, 1530, 545, "Neilreichgasse"], ["n", 1545, 755, 1590, 650, "Bleigasse"], ["j", 410, 1092, 570, 1134, "Pottendorfer"], ["n", 1323, 1126, 1480, 1134, "Domaninggasse"], ["b", 105, 1027, 80, 1027, "B17"],
    ],
  },
  {
    x: 540, y: 1960, w: 540, h: 380, vw: 1568, vh: 1140,
    shapes: [
      ["res", "M0 123L460 123L430 400L240 1060L0 1060Z"],
      ["allot", "M0 120L100 123L50 200L0 190Z"], ["allot", "M440 0L1030 123L1030 260L900 240L690 180L460 160Z"], ["park", "M460 160L650 200L640 390L600 410L440 390Z"], ["pitch", "M470 220L530 230L525 325L460 315ZM540 232L642 240L630 332L530 320ZM535 340L625 348L622 395L600 372L532 362ZM145 276L208 290L200 345L142 330Z"],
      ["golf", "M655 200L960 250L975 330L950 560L890 610L840 605L570 420L640 400Z"], ["plaza", "M705 180L800 195L790 230L695 210Z"],
      ["allot", "M560 420L840 605L905 610L910 940L780 935L430 840L520 590Z"], ["wood", "M960 270L1050 290L1120 430L1050 520L990 640L960 760L900 740L900 590Z"], ["grass", "M1020 350L1080 380L1060 480L1000 560Z"], ["wood", "M905 740L955 740L945 920L920 1131L900 1131Z"], ["park", "M1000 730L1060 720L1120 940L1050 1131L1000 1131Z"],
      ["pitch", "M1040 390L1080 400L1050 435L1020 435Z"], ["wood", "M1120 520L1200 500L1450 630L1450 760L1370 690L1150 560Z"], ["park", "M1270 510L1300 510L1460 640L1450 740L1360 650Z"],
      ["hosp", "M1290 500L1440 420L1470 500L1450 620L1340 560Z"], ["bld", "M1430 460L1480 500L1450 610L1410 580L1380 490Z"], ["bld", "M1440 370L1500 310L1520 350L1510 440L1440 400Z"], ["park", "M1440 130L1540 190L1480 240L1460 190Z"], ["park", "M1500 530L1568 500L1568 640L1490 630Z"], ["wood", "M1480 690L1568 650L1568 720L1500 710Z"],
      ["hosp", "M235 475L310 485L290 540L215 520ZM205 720L275 740L265 805L190 780Z"], ["pitch", "M458 578L474 584L468 598L452 592Z"], ["grass", "M330 780L420 810L410 830L325 800Z"], ["res", "M290 900L780 940L900 940L890 1131L240 1131Z"], ["grass", "M280 910L290 900L270 1060L240 1060Z"], ["wood", "M0 1080L160 1110L170 1131L0 1131Z"],
      ["W", "M95 123L40 345L0 440M40 345L130 380L230 410L400 400M130 380L60 540L160 560L260 540M195 400L260 220L290 150L420 180M0 450L50 470L40 520M240 560L180 700L130 860L60 1060"],
      ["W", "M440 395L560 410L560 450L530 590L420 830L330 800M420 490L530 590M380 620L440 640L420 690M0 600L140 620L130 720L270 750L270 850M30 715L200 740M0 790L150 800M0 640L100 680L130 620M30 720L40 860"],
      ["V", "M290 905L440 940L560 970L750 985M780 930L780 1131"], ["W", "M350 950L330 1070M430 940L400 1110M500 960L470 1131M570 970L550 1131M640 980L630 1131M720 985L720 1131M0 1030L120 1075M230 1070L420 1090L560 1131M0 880L60 930M210 880L160 1030L190 1060M330 890Q350 870 370 890Q370 910 340 910Z"],
      ["w", "M690 160L680 240L650 270L650 380L570 410M1095 620L1120 560Q1160 530 1260 530Q1330 560 1380 620M525 595L790 690M525 610L660 810"],
      ["W", "M1470 490L1568 520M1480 720L1568 760M1475 910L1568 950M1470 870L1568 880M1070 1060L1200 1100L1370 1131M1150 990L1100 1100M1280 1000L1270 1131M1380 960L1380 1131M1440 900L1380 920M1200 20L1280 60L1350 90M1450 0L1480 80"],
      ["f", "M670 230L860 250L940 350L700 370L650 320M680 330L860 240L890 380L880 560M940 260L980 330L950 430L900 560M700 260L640 370M60 150L300 260M20 200L260 270M20 390L400 450M60 440L400 530M120 560L400 600M40 620L260 660M0 680L200 720M300 940L760 1030M260 1000L760 1090M340 940L320 1070M1000 280L1030 400L940 590M1060 330L1120 440M540 480L480 760M580 500L520 800M620 520L560 820M660 560L600 850M700 590L650 860M740 620L690 880M780 640L740 900M820 660L780 920M860 660L830 930M560 430L900 640M540 560L900 720M500 660L900 800M460 740L900 880M430 840L780 930M1180 1000L1380 1050M1290 520L1450 640M1500 560L1568 560M1500 740L1568 800M1490 600L1568 600M1500 1000L1568 980M1020 700L1000 1131M1060 560L980 760M1460 180L1568 240M470 160L1000 240M600 150L1000 210M1160 1040L1360 1090"],
      ["b", "M780 125L850 155L940 130L1070 140M830 160L960 260Q990 350 960 470L900 620L905 800L915 940L900 1131M440 370L435 400M1000 690L1060 700M1470 140L1568 210M975 325L1020 320"],
      ["k", "M570 425L840 605L900 605M790 937L910 937M0 185L50 205M0 350L10 350"], ["d", "M1568 500L1500 560L1480 690"],
      ["O", "M440 123L420 440L360 600L290 830L170 1150"],
      ["O", "M1160 0L1280 20Q1400 60 1420 120Q1430 230 1460 260L1568 320"], ["O", "M1568 90L1480 90Q1430 100 1440 180L1465 270L1540 300L1510 450L1460 700L1455 900L1470 1131"], ["M", "M1435 280L1568 200"],
      ["M", "M1160 430Q1030 530 990 700L970 950L940 1150"], ["M", "M0 1105L130 1140"], ["y", "M1500 0L1530 80"],
      ["t", "M60 200L0 420"], ["R", "M1480 1040L1490 1131"],
    ],
    stops: [[1536, 60], [1475, 954]],
    castles: [],
    labels: [
      ["j", 97, 212, 233, 212, "Karl-Wrba-"], ["j", 143, 245, 190, 245, "Hof"], ["g", 440, 132, 690, 132, "Kleingartenverein"], ["g", 510, 165, 645, 165, "Boschberg"], ["g", 468, 267, 622, 267, "Franz-Hölbl-"], ["g", 468, 303, 625, 303, "Sportanlage"],
      ["h", 77, 602, 232, 602, "Wienerfeld-"], ["h", 122, 639, 189, 639, "West"], ["q", 180, 864, 384, 864, "Wienerfeld"], ["g", 811, 650, 1066, 650, "Heuberggstätten"], ["x", 930, 692, 1060, 692, "Favoriten"],
      ["g2", 1330, 448, 1453, 448, "Campus"], ["g2", 1352, 483, 1411, 483, "Wien"], ["b", 1515, 483, 0, 0, "B16"], ["b", 1235, 4, 0, 0, "B225"],
      ["n", 55, 290, 103, 140, "Neilreichgasse"], ["n", 220, 345, 268, 215, "Vivaldigasse"], ["n", 437, 320, 452, 90, "Laxenburger St"], ["n", 325, 738, 408, 475, "Laxenburger Straße"], ["n", 231, 420, 382, 412, "Sibeliusstraße"],
      ["n", 285, 556, 330, 438, "Malkigasse"], ["n", 230, 712, 272, 598, "Malkigasse"], ["n", 468, 705, 528, 552, "Herschelgasse"], ["n", 408, 795, 445, 648, "Laplacegasse"], ["n", 984, 930, 998, 710, "Südosttangente"], ["n", 1095, 500, 1150, 420, "Südost"],
      ["n", 513, 970, 648, 990, "Munchgasse"], ["n", 300, 1087, 520, 1134, "Per-Albin-Hansson"], ["n", 408, 1083, 432, 935, "Munthegasse"], ["n", 480, 1105, 506, 965, "Undsetgasse"], ["n", 560, 1118, 578, 1000, "Eddagasse"], ["n", 648, 1130, 658, 1000, "ndingasse"], ["n", 730, 1125, 735, 1020, "Bullgasse"], ["n", 788, 1130, 791, 958, "Macholdastraße"],
      ["n", 1176, 548, 1308, 560, "Saligergasse"], ["h", 1192, 1054, 1325, 1054, "Per-Albin-"], ["h", 1137, 1092, 1380, 1092, "Hansson-Siedlung"], ["h", 1225, 1127, 1290, 1127, "West"],
      ["s", 1436, 110, 1566, 110, "Altes Lan"], ["s", 1386, 1004, 1566, 1004, "Alaudagasse"], ["n", 1465, 275, 1566, 215, "Laaerber"], ["n", 1295, 1000, 1360, 1008, "gasse"], ["n", 12, 960, 45, 840, "aulnagasse"], ["g", 1533, 557, 1566, 557, "Laa"], ["g", 1550, 700, 1566, 700, "V"], ["g", 1546, 745, 1566, 745, "La"],
    ],
  },
];

/* ---------- Building texture ---------- */

function makeRandom(seed) {
  let s = seed;
  return () => {
    s = (s * 1664525 + 1013904223) % 4294967296;
    return s / 4294967296;
  };
}

function makeBlocks(x0, y0, x1, y1, angle, seed) {
  const rnd = makeRandom(seed);
  const a = (angle * Math.PI) / 180;
  const ca = Math.cos(a);
  const sa = Math.sin(a);
  const cx = (x0 + x1) / 2;
  const cy = (y0 + y1) / 2;
  const r = Math.hypot(x1 - x0, y1 - y0) / 2;
  const map = (u, v) => [cx + u * ca - v * sa, cy + u * sa + v * ca];
  const quad = (u, v, w, h) =>
    "M" + [[u, v], [u + w, v], [u + w, v + h], [u, v + h]].map(([p, q]) => map(p, q).map((n) => n.toFixed(1)).join(" ")).join("L") + "Z";
  let houses = "";
  let green = "";
  for (let v = -r; v < r; ) {
    const bh = 36 + rnd() * 26;
    for (let u = -r; u < r; ) {
      const bw = 44 + rnd() * 40;
      const [px, py] = map(u + bw / 2, v + bh / 2);
      const inside = px > x0 - 35 && px < x1 + 35 && py > y0 - 35 && py < y1 + 35;
      const hidden = px > 165 && px < 915 && py > 515 && py < 1960;
      if (inside && !hidden) {
        for (let q = 0; q < bh - 5; ) {
          const hh = 4 + rnd() * 5;
          for (let p = 0; p < bw - 4; ) {
            const ww = 3 + rnd() * 7;
            const k = rnd();
            if (k > 0.1) houses += quad(u + p, v + q, Math.min(ww, bw - 3 - p), Math.min(hh, bh - 3 - q));
            else if (k < 0.05) green += quad(u + p, v + q, ww + 4, hh + 2);
            p += ww + 0.3;
          }
          q += hh + 0.3;
        }
      }
      u += bw;
    }
    v += bh;
  }
  return { houses, green };
}

const DISTRICTS = [
  [0, 258, 540, 480, 9, 11],
  [540, 258, 1080, 480, -38, 23],
  [0, 480, 165, 1000, -6, 31],
  [0, 1000, 125, 1560, -20, 47],
  [915, 480, 1080, 700, -30, 53],
  [955, 1050, 1080, 1400, -12, 61],
  [915, 1400, 1080, 2010, 8, 71],
  [540, 2000, 1080, 2337, 15, 97],
].map(([a, b, c, d, e, f]) => ({ id: f, box: [a, b, c - a, d - b], ...makeBlocks(a, b, c, d, e, f) }));

/* ---------- Map labels ---------- */

const LABELS = {
  s: { fill: "#2b3263", weight: 700 },
  q: { fill: "#353535", weight: 400 },
  c: { fill: "#151515", weight: 400 },
  h: { fill: "#1d1d1d", weight: 400 },
  n: { fill: "#080808", weight: 400 },
  g: { fill: "#173c20", weight: 400, italic: true },
  g2: { fill: "#10381a", weight: 400 },
  i: { fill: "#172517", weight: 400, italic: true },
  j: { fill: "#262626", weight: 400, italic: true },
  u: { fill: "#2b4a63", weight: 400, italic: true },
  x: { fill: "#571c1c", weight: 400, italic: true },
  p: { fill: "#2c5068", weight: 400 },
};

function emWidth(text, bold) {
  let n = 0;
  for (const ch of text) {
    if ("iljI".includes(ch)) n += 0.27;
    else if ("ft-. r".includes(ch)) n += 0.36;
    else if ("mwMW".includes(ch)) n += 0.9;
    else if ("szckvy".includes(ch)) n += 0.49;
    else n += 0.59;
  }
  return n * (bold ? 1.07 : 0.98);
}

function MapLabel({ tile, label }) {
  const [kind, ax, ay, bx, by, text] = label;
  const sx = tile.w / tile.vw;
  const sy = tile.h / tile.vh;
  const oy = tile.oy || 0;
  const x1 = tile.x + ax * sx;
  const y1 = tile.y + (ay - oy) * sy;
  if (kind === "b") {
    const w = text.length * 6 + 8;
    return (
      <g>
        <rect x={x1 - w / 2} y={y1 - 9} width={w} height={17} rx={2} fill="#62574a" stroke="#4a3b2a" />
        <text x={x1} y={y1 + 4} textAnchor="middle" fontSize="10" fill="#2a2118">{text}</text>
      </g>
    );
  }
  const x2 = tile.x + bx * sx;
  const y2 = tile.y + (by - oy) * sy;
  const len = Math.hypot(x2 - x1, y2 - y1);
  const st = LABELS[kind];
  const angle = (Math.atan2(y2 - y1, x2 - x1) * 180) / Math.PI;
  return (
    <text
      transform={`translate(${x1.toFixed(1)} ${y1.toFixed(1)}) rotate(${angle.toFixed(1)})`}
      fontSize={(len / emWidth(text, st.weight === 700)).toFixed(2)}
      textLength={len.toFixed(1)}
      fontWeight={st.weight}
      fontStyle={st.italic ? "italic" : "normal"}
      fill={st.fill}
      stroke="#626262"
      strokeOpacity="0.7"
      strokeWidth="2"
      strokeLinejoin="round"
      paintOrder="stroke"
    >
      {text}
    </text>
  );
}

function Shape({ shape }) {
  const [kind, d] = shape;
  if (FILLS[kind]) {
    return <path d={d} fill={FILLS[kind]} stroke="#000" strokeOpacity="0.12" vectorEffect="non-scaling-stroke" />;
  }
  const [color, width, casing, dash] = LINES[kind];
  return (
    <>
      {casing && <path d={d} fill="none" stroke={casing} strokeWidth={width + 1.6} vectorEffect="non-scaling-stroke" />}
      <path d={d} fill="none" stroke={color} strokeWidth={width} strokeDasharray={dash} strokeLinejoin="round" strokeLinecap={dash ? "butt" : "round"} vectorEffect="non-scaling-stroke" />
      {kind === "R" && <path d={d} fill="none" stroke="#4c4c4c" strokeWidth="2.5" strokeDasharray="8 8" vectorEffect="non-scaling-stroke" />}
    </>
  );
}

function CityMap() {
  return (
    <svg className="block h-full w-full" viewBox="0 258 1080 2079" fontFamily="'Noto Sans', sans-serif">
      <defs>
        <symbol id="castle" viewBox="0 0 14 13">
          <path d="M0 3h1.2v1h1V3h1.2v1.2h1V1.6h1V2.6h1.1V.2h1v2.4h1.100V1.6h1v2.600h1V3h1.200v1h1V3H14v3.400h-.8V13H8.600v-2.200a1.600 1.600 0 0 0-3.200 0V13H.8V6.400H0Z" fill="#2e1d02" />
        </symbol>
        <pattern id="homes" width="74" height="62" patternUnits="userSpaceOnUse" patternTransform="rotate(22)">
          <rect width="74" height="62" fill="#5a5959" />
          <path d="M4 5h18v14H4ZM28 4h12v17H28ZM46 7h20v12H46ZM5 36h13v16H5ZM24 38h20v12H24ZM51 34h14v18H51Z" fill="#564e4a" stroke="#4a423e" />
          <path d="M0 28h74" stroke="#6b4a4a" strokeWidth="2" strokeDasharray="7 8" />
        </pattern>
        <pattern id="plots" width="46" height="40" patternUnits="userSpaceOnUse" patternTransform="rotate(16)">
          <rect width="46" height="40" fill="#4f5b4b" />
          <path d="M4 4h8v8H4ZM20 7h7v8h-7ZM34 3h8v7h-8ZM6 24h8v7H6ZM22 26h9v7h-9ZM36 22h7v9h-7Z" fill="#564f4a" />
        </pattern>
        {DISTRICTS.map((d) => (
          <clipPath id={`area${d.id}`} key={d.id}>
            <rect x={d.box[0]} y={d.box[1]} width={d.box[2]} height={d.box[3]} />
          </clipPath>
        ))}
      </defs>
      <rect y="258" width="1080" height="2079" fill="#5a5958" />
      {DISTRICTS.map((d) => (
        <g key={d.id} clipPath={`url(#area${d.id})`}>
          <path d={d.houses} fill="#564f4b" stroke="#4b4440" strokeWidth="0.7" />
          <path d={d.green} fill="#4d5a42" />
        </g>
      ))}
      {TILES.map((t, i) => (
        <svg key={i} x={t.x} y={t.y} width={t.w} height={t.h} viewBox={`0 ${t.oy || 0} ${t.vw} ${t.vh}`} preserveAspectRatio="none">
          {t.shapes.map((s, j) => (
            <Shape key={j} shape={s} />
          ))}
        </svg>
      ))}
      {TILES.map((t, i) => {
        const px = (x) => t.x + (x * t.w) / t.vw;
        const py = (y) => t.y + ((y - (t.oy || 0)) * t.h) / t.vh;
        return (
          <g key={i}>
            {t.stops.map(([x, y], j) => (
              <rect key={j} x={px(x) - 2.8} y={py(y) - 2.8} width="5.6" height="5.6" fill="#31355a" />
            ))}
            {t.castles.map(([x, y], j) => (
              <use key={j} href="#castle" x={px(x) - 7} y={py(y) - 6.5} width="14" height="13" />
            ))}
            {t.labels.map((l, j) => (
              <MapLabel key={j} tile={t} label={l} />
            ))}
          </g>
        );
      })}
      <rect y="2286" width="1080" height="6" fill="#000" opacity="0.12" />
    </svg>
  );
}

/* ---------- App chrome ---------- */

function StatusBar() {
  return (
    <header className="flex h-[132px] shrink-0 items-center justify-between bg-[#2f2f2f] pr-[93px] pl-[94px] font-['Lato',sans-serif] text-[37px] font-semibold text-white">
      <span className="tracking-[0.2px]">16:56:36</span>
      <div className="flex items-center">
        <svg className="mr-[26px] h-[34px] w-[25px]" viewBox="0 0 25 34" fill="none">
          <path d="M12.500 2C6.500 2 2 6.600 2 12.300c0 6.700 6 12 10.500 18.700C17 24.300 23 19 23 12.300 23 6.600 18.500 2 12.500 2Z" stroke="#fff" strokeWidth="2.800" />
          <circle cx="12.500" cy="12.500" r="4.500" fill="#fff" />
        </svg>
        <svg className="mr-[2px] h-[33px] w-[40px]" viewBox="0 0 40 33">
          <path d="M20 0C12.300 0 5.300 3 0 8.500L20 33L40 8.500C34.700 3 27.700 0 20 0Z" fill="#fff" />
        </svg>
        <svg className="mr-[19px] h-[33px] w-[33px]" viewBox="0 0 33 33">
          <path d="M33 0v33H0Z" fill="#fff" />
        </svg>
        <svg className="mr-[11px] h-[34px] w-[20px]" viewBox="0 0 20 34">
          <path d="M6 0h8v3.500h4a2 2 0 0 1 2 2V32a2 2 0 0 1-2 2H2a2 2 0 0 1-2-2V5.500a2 2 0 0 1 2-2h4Z" fill="#fff" />
          <path d="M3 7.500h14" stroke="#2f2f2f" strokeWidth="1.500" />
        </svg>
        <span className="tracking-[-0.8px]">93%</span>
      </div>
    </header>
  );
}

function TabBar() {
  const tabs = ["Map", "Statist…", "Events", "Comp…", "Settin…"];
  return (
    <nav className="flex h-[126px] shrink-0 border-b-[3px] border-[#57545a] bg-[#666366]">
      {tabs.map((tab, i) => (
        <div key={tab} className="relative flex w-[216px] items-center justify-center pt-[2px] pl-[2px]">
          <span className="text-[36.75px] font-medium tracking-[-0.1px] text-[#292042]">{tab}</span>
          {i === 0 && <span className="absolute -bottom-[3px] left-0 h-2 w-full bg-[#2a2043]" />}
        </div>
      ))}
    </nav>
  );
}

function ScaleBar() {
  return (
    <div className="absolute top-[7px] left-[325px] h-[32px] w-[430px] border-x-[5px] border-t-[5px] border-black text-center text-[25px] leading-[29px] tracking-[0.2px] text-black">
      <span>1.4 km</span>
    </div>
  );
}

function MapButtons() {
  const fab = "flex h-[147px] w-[147px] items-center justify-center rounded-full text-[63px] text-[#666666]";
  return (
    <div className="absolute top-[1459px] right-[42px] flex flex-col items-end">
      <div className="flex h-[74px] w-[190px] items-center justify-end rounded-full bg-[#110f66]/95 pr-[32px] text-[31.5px] tracking-[1px] text-[#666666]">Follow</div>
      <div className={`${fab} mt-[21px] bg-[#000066] shadow-[0_6px_14px_rgba(0,0,0,0.25)]`}><MdMyLocation /></div>
      <div className={`${fab} mt-[21px] bg-[#353535] shadow-[0_6px_14px_rgba(0,0,0,0.25)]`}><MdPeople /></div>
      <div className={`${fab} mt-[21px] bg-[#660000] shadow-[0_6px_14px_rgba(0,0,0,0.25)]`}><MdPlayArrow /></div>
    </div>
  );
}

function PrecisionOption({ title, detail }) {
  return (
    <label className="flex min-h-[126px] items-center">
      <span className="flex h-[126px] w-[126px] shrink-0 items-center justify-center">
        <span className="h-[53px] w-[53px] rounded-full border-[5.25px] border-[#49454f]" />
      </span>
      <span className="ml-[21px] flex flex-1 flex-col whitespace-nowrap">
        <span className="text-[36.75px] leading-[53px] font-medium tracking-[-0.02px]">{title}</span>
        <span className="text-[31.5px] leading-[42.4px] tracking-[0.84px]">{detail}</span>
      </span>
    </label>
  );
}

function FollowDialog() {
  return (
    <section className="absolute top-[468px] left-[120px] flex h-[1533px] w-[840px] flex-col rounded-[73.5px] bg-[#eee8f4] p-[63px] text-[#49454f]">
      <div className="flex h-[126px] items-center justify-between">
        <h1 className="text-[63px] leading-[84px] whitespace-nowrap text-[#1d1b20]">Follow Active Users</h1>
        <button className="flex h-[126px] w-[126px] items-center justify-center text-[63px] text-[#1d1b20]"><MdRefresh /></button>
      </div>
      <div className="mt-[42px] flex h-[63px] items-center">
        <MdSettings className="h-[52.5px] w-[52.5px] text-[#6750a4]" />
        <h2 className="ml-[21px] text-[42px] leading-[63px] font-medium tracking-[0.72px]">Trail Precision</h2>
      </div>
      <div className="mt-[33px] flex flex-col gap-[21px]">
        <PrecisionOption title="Maximum Detail" detail={<>Shows every GPS point (most<br />detailed)</>} />
        <PrecisionOption title="Balanced" detail={<>2m minimum distance<br />(recommended)</>} />
        <PrecisionOption title="Simplified" detail="5m minimum distance (less cluttered)" />
      </div>
      <div className="mt-[52px] h-[3px] shrink-0 bg-[#cac4d0]" />
      <h2 className="mt-[42px] text-[42px] leading-[63px] font-medium tracking-[0.72px]">Available Users</h2>
      <div className="mt-[105px] flex flex-col items-center">
        <MdPerson className="h-[126px] w-[126px]" />
        <p className="mt-[21px] text-[42px] leading-[63px] tracking-[1.2px]">No active users found</p>
      </div>
      <div className="mt-[109px] flex h-[105px] shrink-0 justify-end gap-[21px] text-[36.75px] font-medium tracking-[-0.22px]">
        <button className="h-[105px] w-[239px] rounded-full border-[3px] border-[#79747e] text-[#6750a4]">Cancel</button>
        <button className="h-[105px] w-[439px] rounded-full bg-[#d6d0db] text-[#8f8b94]">Follow Selected (0)</button>
      </div>
    </section>
  );
}

export default function App() {
  return (
    <div className="relative flex h-[2400px] w-[1080px] flex-col overflow-hidden bg-black font-['Roboto',sans-serif]">
      <StatusBar />
      <TabBar />
      <main className="relative h-[2079px] shrink-0 overflow-hidden">
        <CityMap />
        <ScaleBar />
        <MapButtons />
      </main>
      <footer className="flex h-[63px] shrink-0 justify-center bg-black pt-[27px]">
        <span className="h-[10px] w-[284px] rounded-full bg-[#ebebeb]" />
      </footer>
      <FollowDialog />
    </div>
  );
}
